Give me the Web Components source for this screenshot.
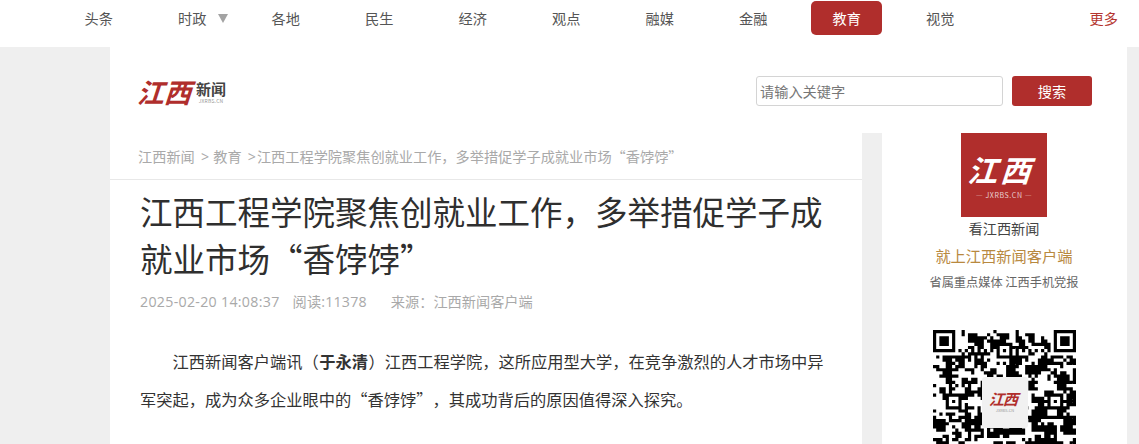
<!DOCTYPE html>
<html lang="zh-CN">
<head>
<meta charset="utf-8">
<title>江西工程学院聚焦创就业工作，多举措促学子成就业市场“香饽饽”</title>
<style>
  html, body { margin: 0; height: 444px; overflow: hidden; }
  body {
    background: #efefef;
    font-family: "Noto Sans CJK SC", "Noto Sans", sans-serif;
    text-spacing-trim: space-all;
    color: #333;
  }
  .page { display: block; width: 1017px; margin-left: 110px; }
  .columns { display: flex; gap: 20px; align-items: flex-start; }
  .sep { font-family: "Open Sans", sans-serif; margin: 0 1px 0 3px; }
  p b { margin: 0 .5px; }
</style>
</head>
<body>
<site-nav>
  <nav-item>头条</nav-item>
  <nav-item arrow>时政</nav-item>
  <nav-item>各地</nav-item>
  <nav-item>民生</nav-item>
  <nav-item>经济</nav-item>
  <nav-item>观点</nav-item>
  <nav-item>融媒</nav-item>
  <nav-item>金融</nav-item>
  <nav-item active>教育</nav-item>
  <nav-item>视觉</nav-item>
</site-nav>

<div class="page">
  <site-header></site-header>
  <div class="columns">
    <news-article>
      <span slot="crumb">江西新闻 <span class="sep">&gt;</span> 教育 <span class="sep">&gt;</span>江西工程学院聚焦创就业工作，多举措促学子成就业市场“香饽饽”</span>
      <span slot="title">江西工程学院聚焦创就业工作，多举措促学子成就业市场“香饽饽”</span>
      <p>江西新闻客户端讯（<b>于永清</b>）江西工程学院，这所应用型大学，在竞争激烈的人才市场中异军突起，成为众多企业眼中的“香饽饽”，其成功背后的原因值得深入探究。</p>
    </news-article>
    <side-panel></side-panel>
  </div>
</div>

<script>
class SiteNav extends HTMLElement {
  constructor() {
    super();
    this.attachShadow({ mode: "open" });
  }
  connectedCallback() {
    this.shadowRoot.innerHTML = `
      <style>
        :host { display: block; height: 47px; background: #fff; }
        .bar {
          display: grid;
          grid-template-columns: repeat(10, 93.5px) 1fr;
          padding: 1px 21px 0 52px;
          align-items: start;
        }
        .more { justify-self: end; font-size: 14.2px; line-height: 34px; color: #b5352f; }
      </style>
      <div class="bar">
        <slot></slot>
        <span class="more">更多</span>
      </div>
    `;
  }
}

class NavItem extends HTMLElement {
  constructor() {
    super();
    this.attachShadow({ mode: "open" });
  }
  connectedCallback() {
    this.shadowRoot.innerHTML = `
      <style>
        :host { display: block; position: relative; text-align: center; font-size: 14.2px; line-height: 34px; color: #555; }
        :host([active]) { color: #fff; }
        :host([active]) .label {
          display: block;
          width: 71px;
          margin: 0 auto;
          background: #b02e2c;
          border-radius: 5px;
        }
        svg { position: absolute; left: 72px; top: 13px; }
      </style>
      <span class="label"><slot></slot></span>
      ${this.hasAttribute("arrow") ? '<svg width="10" height="9" viewBox="0 0 10 9"><path d="M0 0h10L5 9z" fill="#a3a3a3"/></svg>' : ""}
    `;
  }
}

class SiteHeader extends HTMLElement {
  constructor() {
    super();
    this.attachShadow({ mode: "open" });
  }
  connectedCallback() {
    this.shadowRoot.innerHTML = `
      <style>
        :host { display: flex; height: 86px; box-sizing: border-box; background: #fff; padding: 29px 35px 0 29px; justify-content: space-between; align-items: flex-start; }
        .logo { display: flex; align-items: center; height: 32px; color: #b02e2c; }
        .brush {
          display: inline-block;
          font-size: 27px;
          font-weight: 700;
          line-height: 32px;
          transform: skewX(-18deg);
          margin-left: 1px;
        }
        .name { display: flex; flex-direction: column; align-items: center; margin-left: 2px; }
        .name b { font-size: 15px; line-height: 16px; color: #444; }
        .name i { font-size: 5px; line-height: 7px; font-style: normal; color: #999; letter-spacing: .2px; }
        form { display: flex; gap: 9px; margin: 0; }
        input {
          box-sizing: border-box;
          width: 247px;
          height: 30px;
          border: 1px solid #d4d4d4;
          border-radius: 3px;
          padding: 0 3px;
          font: 14.2px "Noto Sans CJK SC", sans-serif;
          color: #333;
          outline: none;
        }
        input::placeholder { color: #777; opacity: 1; }
        button {
          width: 80px;
          height: 30px;
          border: 0;
          border-radius: 3px;
          background: #b02e2c;
          color: #fff;
          padding: 0;
          font: 14.2px "Noto Sans CJK SC", sans-serif;
        }
      </style>
      <div class="logo">
        <span class="brush">江西</span>
        <span class="name"><b>新闻</b><i>JXRBS.CN</i></span>
      </div>
      <form onsubmit="return false">
        <input placeholder="请输入关键字">
        <button>搜索</button>
      </form>
    `;
  }
}

const articleTpl = document.createElement("template");
articleTpl.innerHTML = `
  <style>
    :host { display: block; width: 752px; height: 400px; box-sizing: border-box; background: #fff; }
    .crumb {
      height: 47px;
      box-sizing: border-box;
      padding: 13px 0 0 28px;
      border-bottom: 1px solid #e8e8e8;
      font-size: 14.2px;
      line-height: 20px;
      color: #a9a9a9;
      white-space: nowrap;
    }
    .inner { width: 685px; padding: 7px 0 0 30px; }
    h1 { margin: 0; font-size: 32.5px; line-height: 47px; font-weight: 400; color: #2f2f2f; }
    .meta {
      display: flex;
      margin-top: 11px;
      font-family: "Open Sans", "Noto Sans CJK SC", sans-serif;
      font-size: 14.2px;
      line-height: 20px;
      color: #a9a9a9;
    }
    .meta span:nth-child(1) { letter-spacing: .3px; }
    .meta span:nth-child(2) { margin-left: 13px; letter-spacing: .2px; }
    .meta span:nth-child(3) { margin-left: 24px; }
    .body { margin-top: 30px; }
    ::slotted(p) { margin: 0; font-size: 16.26px; line-height: 38px; text-indent: 2em; color: #333; }
  </style>
  <div class="crumb"><slot name="crumb"></slot></div>
  <div class="inner">
    <h1><slot name="title"></slot></h1>
    <div class="meta"><span>2025-02-20 14:08:37</span><span>阅读:11378</span><span>来源：江西新闻客户端</span></div>
    <div class="body"><slot></slot></div>
  </div>
`;

class NewsArticle extends HTMLElement {
  constructor() {
    super();
    this.attachShadow({ mode: "open" }).appendChild(articleTpl.content.cloneNode(true));
  }
}

class QrCode extends HTMLElement {
  constructor() {
    super();
    this.attachShadow({ mode: "open" });
  }
  connectedCallback() {
    const n = 45;
    const grid = [];
    // seeded so the picture is the same on each run
    let seed = 20250220;
    const next = () => (seed = (seed * 1103515245 + 12345) & 0x7fffffff) / 0x7fffffff;
    for (let y = 0; y < n; y++) {
      grid.push([]);
      for (let x = 0; x < n; x++) {
        const left = x ? grid[y][x - 1] : 0;
        const up = y ? grid[y - 1][x] : 0;
        grid[y].push(next() < 0.26 + 0.28 * (left + up) ? 1 : 0);
      }
    }
    const square = (cx, cy, r, on) => {
      for (let y = cy - r; y <= cy + r; y++)
        for (let x = cx - r; x <= cx + r; x++)
          if (grid[y] && x >= 0 && x < n && (Math.abs(x - cx) === r || Math.abs(y - cy) === r)) grid[y][x] = on;
    };
    for (const [cx, cy] of [[3, 3], [41, 3], [3, 41]]) {
      square(cx, cy, 4, 0);
      square(cx, cy, 3, 1);
      square(cx, cy, 2, 0);
      square(cx, cy, 1, 1);
      grid[cy][cx] = 1;
    }
    for (const [cx, cy] of [[22, 6], [6, 22], [38, 22], [22, 38], [38, 38]]) {
      square(cx, cy, 2, 1);
      square(cx, cy, 1, 0);
      grid[cy][cx] = 1;
    }
    for (let i = 8; i < n - 8; i++) {
      if (Math.abs(i - 22) > 2) {
        grid[6][i] = i % 2 ? 0 : 1;
        grid[i][6] = i % 2 ? 0 : 1;
      }
    }
    let d = "";
    grid.forEach((row, y) => row.forEach((on, x) => { if (on) d += `M${x} ${y}h1v1h-1z`; }));
    this.shadowRoot.innerHTML = `
      <style>
        :host { display: block; position: relative; width: 143px; height: 143px; }
        svg { display: block; }
        .badge {
          position: absolute;
          left: 49px;
          top: 47px;
          width: 46px;
          height: 51px;
          box-sizing: border-box;
          padding-top: 13px;
          background: #f1f1f1;
          border-radius: 3px;
          text-align: center;
          color: #b02e2c;
        }
        .badge b { display: block; font-size: 15px; line-height: 17px; transform: skewX(-18deg); letter-spacing: -1px; }
        .badge i { display: block; font-size: 4px; line-height: 6px; font-style: normal; color: #999; }
      </style>
      <svg width="143" height="143" viewBox="0 0 45 45"><path d="${d}" fill="#000"/></svg>
      <div class="badge"><b>江西</b><i>JXRBS.CN</i></div>
    `;
  }
}

class SidePanel extends HTMLElement {
  constructor() {
    super();
    this.attachShadow({ mode: "open" });
  }
  connectedCallback() {
    this.shadowRoot.innerHTML = `
      <style>
        :host { display: flex; flex-direction: column; align-items: center; width: 245px; height: 400px; box-sizing: border-box; padding-right: 1px; background: #fff; }
        .app {
          width: 86px;
          height: 84px;
          box-sizing: border-box;
          padding-top: 18px;
          background: #b02e2c;
          color: #fff;
          text-align: center;
        }
        .app b { display: block; font-size: 30px; line-height: 36px; letter-spacing: 3px; transform: skewX(-18deg); }
        .app span { display: block; margin-top: 3px; font-size: 7px; line-height: 10px; letter-spacing: .6px; color: #e9cfcf; white-space: nowrap; }
        .see { font-size: 14.2px; line-height: 23px; color: #444; }
        .go { font-size: 15.25px; line-height: 30px; color: #b8893f; }
        .tag { font-size: 12.2px; line-height: 25px; color: #666; }
        qr-code { margin: 35px 0 0 1px; }
      </style>
      <div class="app"><b>江西</b><span>— JXRBS.CN —</span></div>
      <div class="see">看江西新闻</div>
      <div class="go">就上江西新闻客户端</div>
      <div class="tag">省属重点媒体 江西手机党报</div>
      <qr-code></qr-code>
    `;
  }
}

customElements.define("site-nav", SiteNav);
customElements.define("nav-item", NavItem);
customElements.define("site-header", SiteHeader);
customElements.define("news-article", NewsArticle);
customElements.define("qr-code", QrCode);
customElements.define("side-panel", SidePanel);
</script>
</body>
</html>
